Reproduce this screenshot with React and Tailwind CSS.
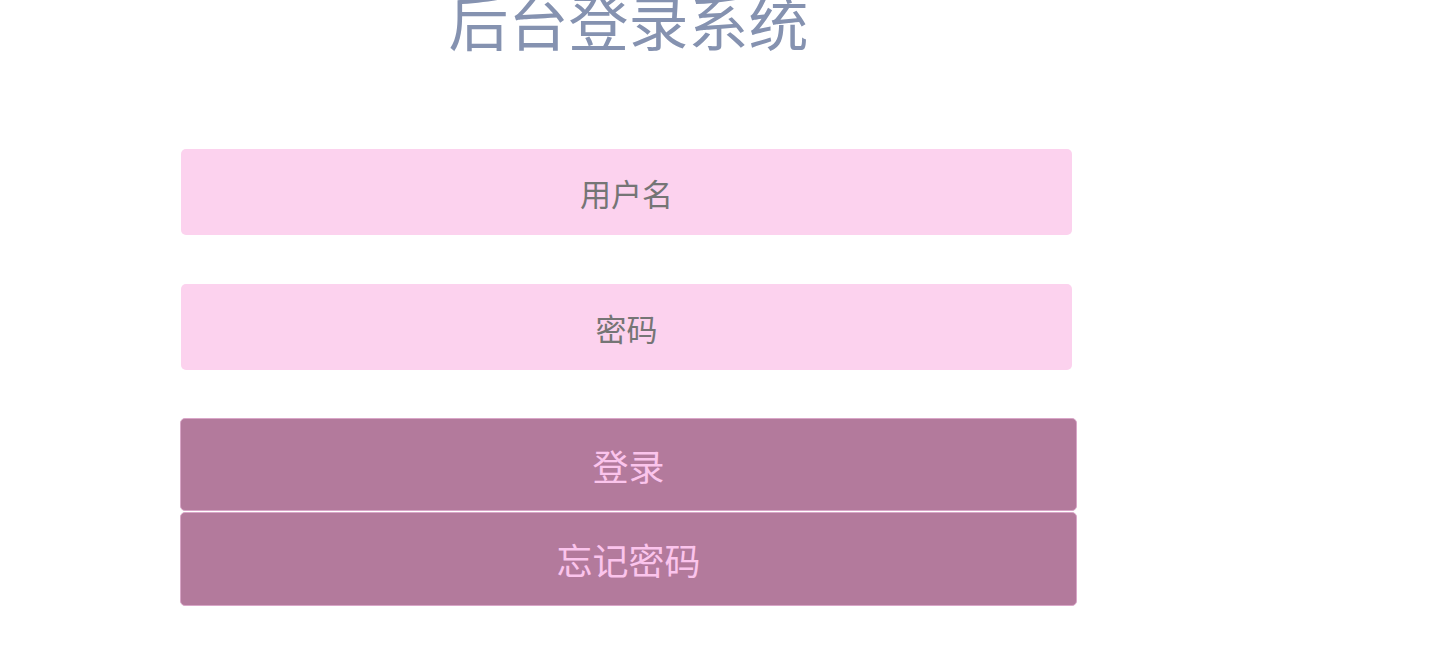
import React from 'react';

const App = () => {
    return (
        <div className="w-[1449px] h-[666px] overflow-hidden bg-white" style={{ fontFamily: '"Noto Sans CJK SC", "Liberation Sans", sans-serif' }}>
            <div className="ml-[180px] w-[897px] flex flex-col">
                <h1 className="-mt-[10px] text-center text-[60px] leading-[60px] font-normal text-[#8592b0]">后台登录系统</h1>

                {/* 表单 */}
                <div className="mt-[99px] flex flex-col gap-[49px] pl-[1px] pr-[5px]">
                    <input
                        type="text"
                        placeholder="用户名"
                        className="h-[86px] w-full rounded-[5px] bg-[#fcd2ee] text-center text-[31px] text-[#6f6f6f] placeholder:text-[#757575] outline-none"
                    />
                    <input
                        type="password"
                        placeholder="密码"
                        className="h-[86px] w-full rounded-[5px] bg-[#fcd2ee] text-center text-[31px] text-[#6f6f6f] placeholder:text-[#757575] outline-none"
                    />
                </div>

                <div className="mt-[48px] flex flex-col gap-[1px]">
                    <button className="h-[93px] w-full rounded-[5px] border border-[#d9a6c8] bg-[#b37a9c] text-[36px] text-[#fbc4ec]">
                        登录
                    </button>
                    <button className="h-[94px] w-full rounded-[5px] border border-[#d9a6c8] bg-[#b37a9c] text-[36px] text-[#fbc4ec]">
                        忘记密码
                    </button>
                </div>
            </div>
        </div>
    );
};

export default App;
